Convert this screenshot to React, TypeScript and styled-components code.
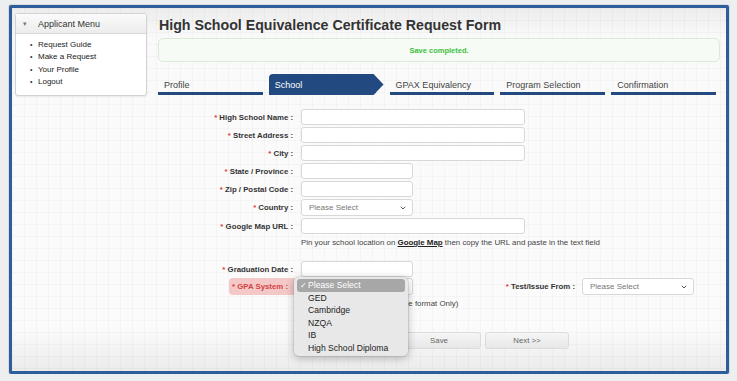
import React from 'react';
import styled, { createGlobalStyle } from 'styled-components';
import { ChevronDown } from 'lucide-react';

const GlobalStyle = createGlobalStyle`
  html, body {
    margin: 0;
    padding: 0;
    background: #eceef0;
    font-family: "Liberation Sans", Arial, Helvetica, sans-serif;
  }
  * { box-sizing: border-box; }
`;

const menuItems = ['Request Guide', 'Make a Request', 'Your Profile', 'Logout'];
const steps = ['Profile', 'School', 'GPAX Equivalency', 'Program Selection', 'Confirmation'];
const gpaOptions = ['GED', 'Cambridge', 'NZQA', 'IB', 'High School Diploma'];

const App: React.FC = () => {
  return (
    <>
      <GlobalStyle />
      <Frame>
        {/* Left menu */}
        <Sidebar>
          <SidebarHeader>
            <Caret>▾</Caret>
            Applicant Menu
          </SidebarHeader>
          <SidebarList>
            {menuItems.map((item) => (
              <SidebarItem key={item}>
                <Bullet>•</Bullet>
                {item}
              </SidebarItem>
            ))}
          </SidebarList>
        </Sidebar>

        {/* Main form area */}
        <Main>
          <Title>High School Equivalence Certificate Request Form</Title>
          <Alert>Save completed.</Alert>

          <Tabs>
            {steps.map((step) => (
              <Tab key={step} $active={step === 'School'}>
                {step}
              </Tab>
            ))}
          </Tabs>

          <Form>
            <FormRow $mt={0}>
              <Label><Req>*</Req> High School Name :</Label>
              <TextInput $w={224} />
            </FormRow>
            <FormRow>
              <Label><Req>*</Req> Street Address :</Label>
              <TextInput $w={224} />
            </FormRow>
            <FormRow>
              <Label><Req>*</Req> City :</Label>
              <TextInput $w={224} />
            </FormRow>
            <FormRow>
              <Label><Req>*</Req> State / Province :</Label>
              <TextInput $w={112} />
            </FormRow>
            <FormRow>
              <Label><Req>*</Req> Zip / Postal Code :</Label>
              <TextInput $w={112} />
            </FormRow>
            <FormRow>
              <Label><Req>*</Req> Country :</Label>
              <SelectBox $w={112}>
                Please Select
                <ChevronDown size={8} strokeWidth={3} />
              </SelectBox>
            </FormRow>
            <FormRow>
              <Label><Req>*</Req> Google Map URL :</Label>
              <TextInput $w={224} />
            </FormRow>
            <FormRow $mt={4}>
              <span />
              <HelpText>
                Pin your school location on <MapLink>Google Map</MapLink> then copy the URL and paste in the text field
              </HelpText>
            </FormRow>

            <FormRow $mt={14}>
              <Label><Req>*</Req> Graduation Date :</Label>
              <TextInput $w={112} />
            </FormRow>

            <SplitRow>
              <FormRow $mt={0}>
                <Label>
                  <ErrorMark><Req>*</Req> GPA System :</ErrorMark>
                </Label>
                <SelectWrap>
                  <SelectBox $w={112}>
                    Please Select
                    <ChevronDown size={8} strokeWidth={3} />
                  </SelectBox>
                  <OptionMenu>
                    <OptionItem $selected>
                      <Check>✓</Check>Please Select
                    </OptionItem>
                    {gpaOptions.map((opt) => (
                      <OptionItem key={opt}>{opt}</OptionItem>
                    ))}
                  </OptionMenu>
                </SelectWrap>
              </FormRow>
              <RightGroup>
                <Label><Req>*</Req> Test/Issue From :</Label>
                <SelectBox $w={112}>
                  Please Select
                  <ChevronDown size={8} strokeWidth={3} />
                </SelectBox>
              </RightGroup>
            </SplitRow>
            <FormRow $mt={4}>
              <span />
              <HelpText>(Fill in your GPA in the 4.0 scale format Only)</HelpText>
            </FormRow>

            <Buttons>
              <Button>&lt;&lt; Back</Button>
              <Button>Save</Button>
              <Button>Next &gt;&gt;</Button>
            </Buttons>
          </Form>
        </Main>
      </Frame>
    </>
  );
};

// Styled Components
const Frame = styled.div`
  margin: 5px 8px 0 9px;
  height: 369px;
  border: 3px solid #2d5e9b;
  border-radius: 2px;
  display: flex;
  gap: 11px;
  padding: 2px 6px 0 3px;
  background-color: #fafafa;
  background-image:
    linear-gradient(rgba(0, 0, 0, 0.022) 1px, transparent 1px),
    linear-gradient(90deg, rgba(0, 0, 0, 0.022) 1px, transparent 1px),
    linear-gradient(180deg, #ececec 0px, #fafafa 30px, #fbfbfb 320px, #ebebeb 100%);
  background-size: 12px 12px, 12px 12px, 100% 100%;
  box-shadow: 0 0 0 1px rgba(0, 0, 0, 0.08);
`;

const Sidebar = styled.div`
  width: 132px;
  height: 83px;
  margin-top: 3px;
  flex-shrink: 0;
  background: #ffffff;
  border: 1px solid #d2d2d2;
  border-radius: 3px;
  box-shadow: 0 1px 2px rgba(0, 0, 0, 0.08);
`;

const SidebarHeader = styled.div`
  height: 20px;
  display: flex;
  align-items: center;
  padding-left: 7px;
  font-size: 9px;
  color: #333;
  border-bottom: 1px solid #d8d8d8;
  background: linear-gradient(180deg, #fbfbfb, #ececec);
`;

const Caret = styled.span`
  width: 15px;
  font-size: 7px;
  color: #777;
`;

const SidebarList = styled.ul`
  list-style: none;
  margin: 0;
  padding: 4px 0 0 14px;
`;

const SidebarItem = styled.li`
  display: flex;
  align-items: center;
  height: 12.5px;
  font-size: 8px;
  color: #222;
`;

const Bullet = styled.span`
  width: 8px;
  font-size: 7px;
  color: #333;
`;

const Main = styled.div`
  flex: 1;
  display: flex;
  flex-direction: column;
`;

const Title = styled.h1`
  margin: 7px 0 0 1px;
  font-size: 14.2px;
  line-height: 17px;
  font-weight: 700;
  color: #333;
`;

const Alert = styled.div`
  margin-top: 4px;
  height: 24px;
  display: flex;
  align-items: center;
  justify-content: center;
  font-size: 7.5px;
  font-weight: 700;
  color: #3cbf3c;
  background: #f7fbf6;
  border: 1px solid #dcebd9;
  border-radius: 5px;
`;

const Tabs = styled.div`
  display: flex;
  gap: 6px;
  margin-top: 12px;
  width: 558px;
`;

const Tab = styled.div<{ $active?: boolean }>`
  flex: ${(p) => (p.$active ? 1.1 : 1)} 1 0;
  height: 21px;
  padding: 6px 0 0 6px;
  font-size: 9px;
  white-space: nowrap;
  color: ${(p) => (p.$active ? '#ffffff' : '#444')};
  background: ${(p) => (p.$active ? '#234a80' : 'transparent')};
  border-bottom: 3px solid #234a80;
  border-top-left-radius: ${(p) => (p.$active ? '4px' : '0')};
  clip-path: ${(p) =>
    p.$active
      ? 'polygon(0 0, calc(100% - 10px) 0, 100% 50%, calc(100% - 10px) 100%, 0 100%)'
      : 'none'};
`;

const Form = styled.div`
  margin-top: 14px;
  display: flex;
  flex-direction: column;
`;

const FormRow = styled.div<{ $mt?: number }>`
  display: grid;
  grid-template-columns: 135px auto;
  column-gap: 8px;
  align-items: center;
  justify-content: start;
  margin-top: ${(p) => (p.$mt ?? 2)}px;
`;

const Label = styled.label`
  text-align: right;
  font-size: 7.8px;
  font-weight: 700;
  color: #333;
  white-space: nowrap;
`;

const Req = styled.span`
  color: #d83a3a;
`;

const ErrorMark = styled.span`
  display: inline-block;
  margin-right: -3px;
  padding: 4px 8px 4px 3px;
  border-radius: 4px;
  background: #f5c8c8;
  color: #d04444;
`;

const TextInput = styled.input<{ $w: number }>`
  width: ${(p) => p.$w}px;
  height: 16px;
  margin: 0;
  border: 1px solid #d8d8d8;
  border-radius: 3px;
  background: #ffffff;
  outline: none;
`;

const SelectBox = styled.div<{ $w: number }>`
  width: ${(p) => p.$w}px;
  height: 17px;
  display: flex;
  align-items: center;
  justify-content: space-between;
  padding: 0 5px 0 7px;
  font-size: 8px;
  color: #777;
  background: #ffffff;
  border: 1px solid #d8d8d8;
  border-radius: 3px;

  svg {
    color: #555;
  }
`;

const HelpText = styled.div`
  font-size: 7.9px;
  color: #444;
  white-space: nowrap;
`;

const MapLink = styled.span`
  color: #222;
  text-decoration: underline;
  font-weight: 700;
`;

const SplitRow = styled.div`
  display: flex;
  justify-content: space-between;
  align-items: center;
  padding-right: 26px;
  margin-top: 1px;
`;

const RightGroup = styled.div`
  display: flex;
  align-items: center;
  gap: 7px;
`;

const SelectWrap = styled.div`
  position: relative;
`;

const OptionMenu = styled.div`
  position: absolute;
  left: -7px;
  top: -1px;
  width: 114px;
  padding: 2px 3px;
  background: #e8e8e8;
  border-radius: 5px;
  box-shadow: 0 2px 8px rgba(0, 0, 0, 0.28), 0 0 0 0.5px rgba(0, 0, 0, 0.12);
  z-index: 10;
`;

const OptionItem = styled.div<{ $selected?: boolean }>`
  height: 12.5px;
  display: flex;
  align-items: center;
  padding-left: ${(p) => (p.$selected ? '3px' : '11px')};
  font-size: 8.6px;
  border-radius: 3px;
  color: ${(p) => (p.$selected ? '#ffffff' : '#222')};
  background: ${(p) => (p.$selected ? '#a7a7a7' : 'transparent')};
`;

const Check = styled.span`
  width: 8px;
  font-size: 8px;
`;

const Buttons = styled.div`
  display: flex;
  justify-content: center;
  gap: 4px;
  margin-top: 24px;
`;

const Button = styled.button`
  width: 84px;
  height: 17px;
  padding: 0;
  font-family: inherit;
  font-size: 7.8px;
  color: #666;
  background: linear-gradient(180deg, #f6f6f6, #e7e7e7);
  border: 1px solid #dcdcdc;
  border-radius: 3px;
`;

export default App;
